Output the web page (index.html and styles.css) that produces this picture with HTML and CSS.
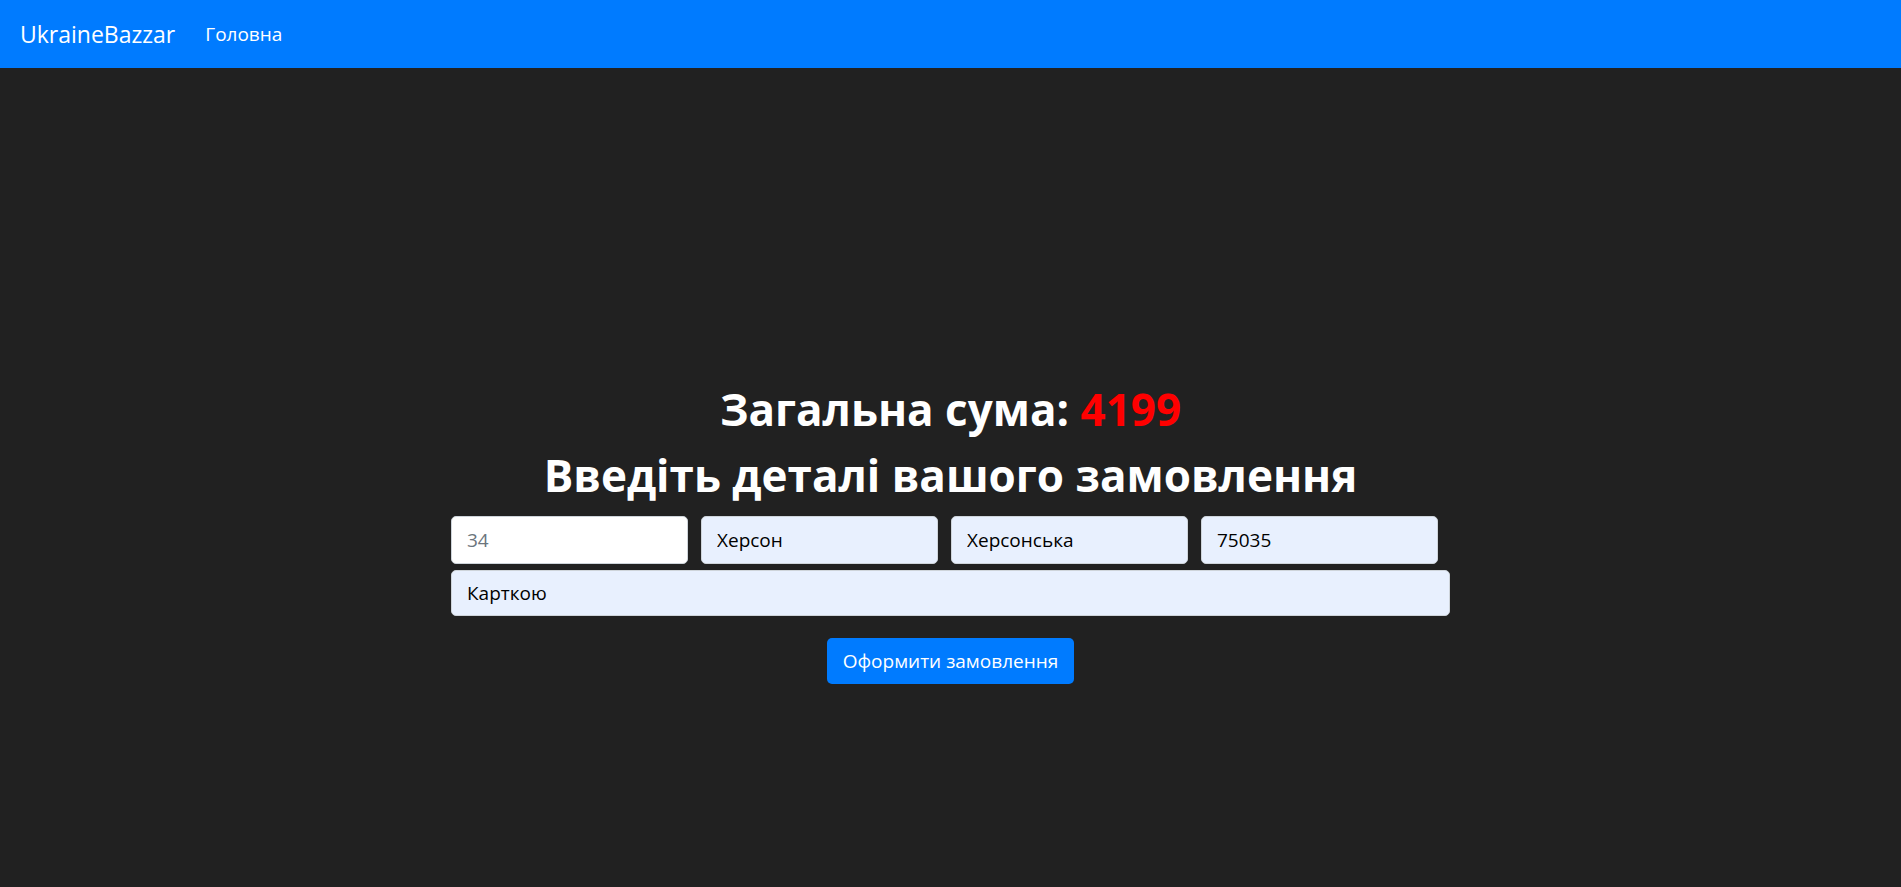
FILE: index.html
```html
<!DOCTYPE html>
<html lang="uk">
<head>
<meta charset="utf-8">
<title>UkraineBazzar</title>
<link rel="stylesheet" href="styles.css">
</head>
<body>
<nav class="navbar">
  <a class="brand" href="#">UkraineBazzar</a>
  <a class="nav-link" href="#">Головна</a>
</nav>
<main class="main">
  <h1 class="total">Загальна сума: <span class="sum">4199</span></h1>
  <h1 class="title">Введіть деталі вашого замовлення</h1>
  <form class="order-form">
    <div class="row">
      <input class="field blank" type="text" placeholder="34">
      <input class="field filled" type="text" value="Херсон">
      <input class="field filled" type="text" value="Херсонська">
      <input class="field filled" type="text" value="75035">
    </div>
    <div class="row">
      <input class="field filled wide" type="text" value="Карткою">
    </div>
    <button class="submit" type="button">Оформити замовлення</button>
  </form>
</main>
</body>
</html>
```
FILE: styles.css
```css
* { box-sizing: border-box; }
html, body {
  margin: 0;
  padding: 0;
  height: 100%;
}
body {
  background: #212121;
  font-family: "Open Sans", "Noto Sans", sans-serif;
  color: #fff;
}
.navbar {
  height: 68px;
  background: #007bff;
  display: flex;
  align-items: center;
  padding: 0 20px;
}
.brand {
  color: #fff;
  text-decoration: none;
  font-size: 23px;
  margin-right: 30px;
}
.nav-link {
  color: #fff;
  text-decoration: none;
  font-size: 19px;
}
.main {
  padding-top: 311px;
  display: flex;
  flex-direction: column;
  align-items: center;
}
.total, .title {
  margin: 0;
  font-size: 44px;
  line-height: 60px;
  font-weight: 700;
  text-align: center;
}
.total { margin-bottom: 6px; }
.title { margin-bottom: 11px; }
.sum { color: #ff0000; }
.order-form {
  width: 999px;
  display: flex;
  flex-direction: column;
  align-items: center;
}
.row {
  display: flex;
  gap: 13px;
  width: 100%;
}
.row + .row { margin-top: 6px; }
.field {
  width: 237px;
  height: 48px;
  border: 1px solid #ced4da;
  border-radius: 5px;
  padding: 0 15px;
  font-family: inherit;
  font-size: 19px;
  color: #000;
  outline: none;
}
.field::placeholder { color: #6c757d; }
.blank { background: #fff; }
.filled { background: #e8f0fe; }
.wide { width: 100%; height: 46px; }
.submit {
  margin-top: 22px;
  height: 46px;
  padding: 0 16px;
  background: #007bff;
  color: #fff;
  border: none;
  border-radius: 5px;
  font-family: inherit;
  font-size: 19px;
}
```
